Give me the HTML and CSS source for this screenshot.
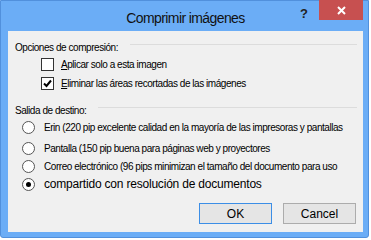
FILE: index.html
```html
<!DOCTYPE html>
<html lang="es">
  <head>
    <meta charset="UTF-8" />
    <title>Comprimir imágenes</title>
    <link rel="stylesheet" href="styles.css">
  </head>
  <body>
    <div class="window">
      <header class="titlebar">
        <span class="title">Comprimir imágenes</span>
        <span class="help">?</span>
        <span class="close">
          <svg width="9" height="9" viewBox="0 0 9 9">
            <path d="M1 1 L8 8 M8 1 L1 8" stroke="#fff" stroke-width="2" />
          </svg>
        </span>
      </header>

      <section class="panel">
        <div class="group-head">
          <span>Opciones de compresión:</span>
          <span class="rule"></span>
        </div>
        <label class="check-row">
          <span class="box"></span>
          <span><u>A</u>plicar solo a esta imagen</span>
        </label>
        <label class="check-row">
          <span class="box">
            <svg width="11" height="11" viewBox="0 0 11 11">
              <path d="M2 5.5 L4.5 8 L9 2.5" fill="none" stroke="#000" stroke-width="2" />
            </svg>
          </span>
          <span><u>E</u>liminar las áreas recortadas de las imágenes</span>
        </label>

        <div class="group-head second">
          <span>Salida de destino:</span>
          <span class="rule"></span>
        </div>
        <label class="radio-row first">
          <span class="radio"></span>
          <span>Erin (220 pip excelente calidad en la mayoría de las impresoras y pantallas</span>
        </label>
        <label class="radio-row second-row">
          <span class="radio"></span>
          <span>Pantalla (150 pip buena para páginas web y proyectores</span>
        </label>
        <label class="radio-row">
          <span class="radio"></span>
          <span>Correo electrónico (96 pips minimizan el tamaño del documento para uso</span>
        </label>
        <label class="radio-row big">
          <span class="radio on"></span>
          <span>compartido con resolución de documentos</span>
        </label>

        <div class="buttons">
          <button type="button" class="button default">OK</button>
          <button type="button" class="button">Cancel</button>
        </div>
      </section>
    </div>
  </body>
</html>
```

FILE: styles.css
```css
body {
  margin: 0;
  background-color: #fff;
  font-family: "Liberation Sans", Arial, sans-serif;
  color: #000;
}

.window {
  width: 367px;
  height: 236px;
  background-color: #6badf6;
  border: 1px solid #5190dc;
  border-radius: 0 0 3px 3px;
  display: flex;
  flex-direction: column;
}

.titlebar {
  height: 30px;
  display: flex;
  align-items: flex-start;
}

.title {
  flex: 1;
  text-align: center;
  font-size: 14px;
  letter-spacing: -0.6px;
  padding-top: 9px;
  padding-left: 70px;
  color: #111;
}

.help {
  font-size: 13px;
  font-weight: bold;
  color: #222;
  margin-top: 5px;
  margin-right: 11px;
}

.close {
  width: 44px;
  height: 20px;
  margin-top: -1px;
  margin-right: 5px;
  background-color: #c75050;
  display: flex;
  align-items: center;
  justify-content: center;
}

.panel {
  margin: 0 5px 0 7px;
  height: 192px;
  background-color: #f0f0f0;
  padding-top: 9px;
  font-size: 10px;
  letter-spacing: -0.45px;
  white-space: nowrap;
}

.group-head {
  height: 14px;
  display: flex;
  align-items: center;
  padding: 0 6px 0 7px;
}

.group-head.second {
  margin-top: 10px;
}

.rule {
  flex: 1;
  align-self: flex-start;
  margin-top: 4px;
  margin-left: 12px;
  border-top: 1px solid #dcdcdc;
}

.check-row {
  height: 19px;
  display: flex;
  align-items: center;
  padding-left: 33px;
}

.check-row:first-of-type {
  margin-top: 1px;
}

.box {
  width: 11px;
  height: 11px;
  border: 1px solid #333;
  background-color: #fff;
  margin-right: 7px;
  display: flex;
  align-items: center;
  justify-content: center;
}

.radio-row {
  height: 18px;
  display: flex;
  align-items: center;
  padding-left: 14px;
}

.radio-row.first {
  margin-top: 1px;
}

.radio-row.second-row {
  margin-top: 3px;
}

.radio {
  width: 11px;
  height: 11px;
  border: 1px solid #555;
  border-radius: 50%;
  background-color: #fff;
  margin-right: 9px;
  display: flex;
  align-items: center;
  justify-content: center;
}

.radio.on::after {
  content: "";
  width: 5px;
  height: 5px;
  border-radius: 50%;
  background-color: #000;
}

.radio-row.big {
  font-size: 12px;
  letter-spacing: -0.2px;
}

.buttons {
  display: flex;
  justify-content: flex-end;
  gap: 11px;
  margin-top: 10px;
  padding-right: 7px;
}

.button {
  width: 73px;
  height: 21px;
  border: 1px solid #acacac;
  background-color: #e5e5e5;
  font-family: "Liberation Sans", Arial, sans-serif;
  font-size: 12px;
  color: #000;
  padding: 0;
}

.button.default {
  border-color: #3c8ee6;
}
```
